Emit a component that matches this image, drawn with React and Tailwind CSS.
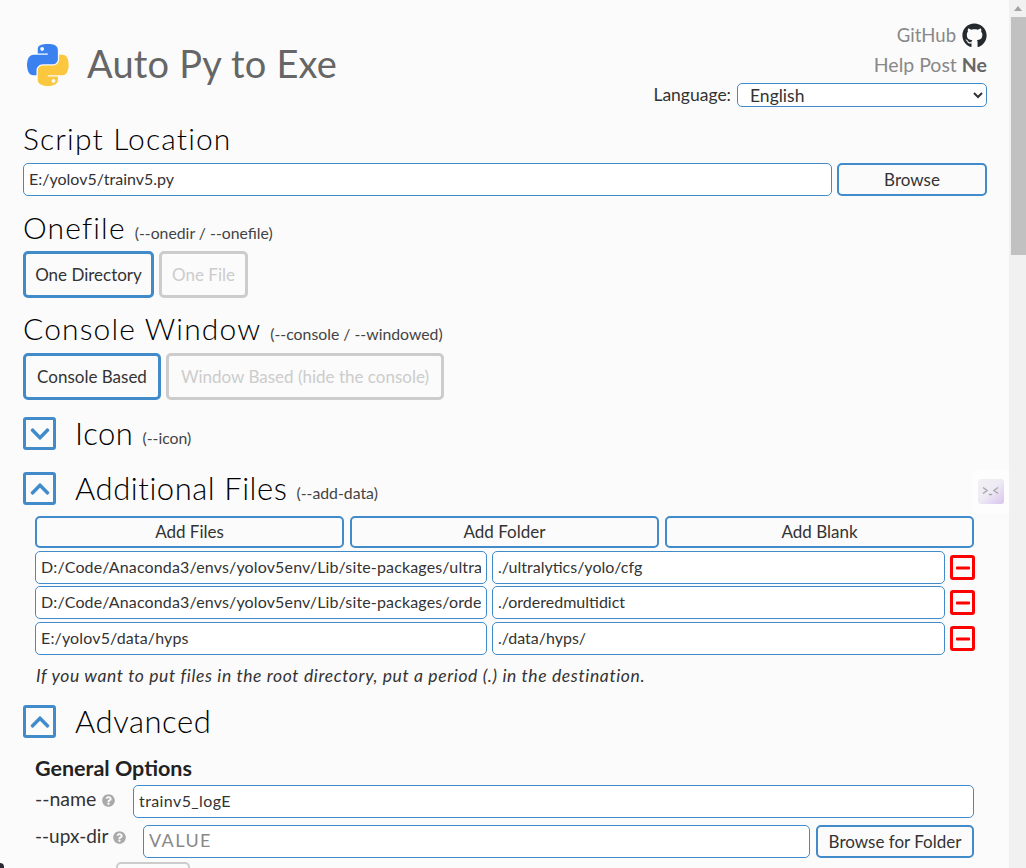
import React from 'react';
import { FaGithub, FaChevronDown, FaChevronUp, FaMinus, FaQuestionCircle } from 'react-icons/fa';

const inputClass = 'h-[33px] min-w-0 rounded-[5px] border border-[#428bca] bg-white px-[5px] pb-[2px] text-[16px] text-[#333] placeholder:text-[#888] outline-none';
const blueButton = 'rounded-[5px] border-2 border-[#428bca] bg-[#fbfbfb] text-[17px] text-[#333]';
const heading = 'text-[30px] leading-[38px] font-light tracking-[1.15px] text-black';
const flagClass = 'ml-[9px] text-[15.8px] text-[#444]';

const PythonLogo = () => (
  <svg viewBox="0 0 112 112" className="w-[42px] h-[42px]">
    <path fill="#3b82f0" d="M54.9 0C50.3 0 46 .4 42.1 1.1 30.8 3.1 28.7 7.3 28.7 15v10.2h26.8v3.4H18.6C10.8 28.7 4 33.3 1.9 42.3c-2.5 10.2-2.6 16.5 0 27.2 1.9 7.9 6.4 13.6 14.2 13.6h9.2V70.8c0-8.8 7.7-16.6 16.8-16.6h26.8c7.4 0 13.4-6.1 13.4-13.6V15c0-7.3-6.1-12.7-13.4-13.9C64.3.3 59.5 0 54.9 0zM40.4 8.2c2.8 0 5 2.3 5 5.1s-2.2 5.1-5 5.1-5-2.3-5-5.1 2.2-5.1 5-5.1z" />
    <path fill="#fbc73f" d="M85.6 28.7v11.9c0 9.2-7.8 17-16.7 17H42.1c-7.3 0-13.4 6.3-13.4 13.6v25.5c0 7.3 6.3 11.5 13.4 13.6 8.5 2.5 16.6 3 26.8 0 6.8-2 13.4-5.9 13.4-13.6V86.5H55.5v-3.4h40.2c7.8 0 10.7-5.4 13.4-13.6 2.8-8.4 2.7-16.5 0-27.2-1.9-7.8-5.6-13.6-13.4-13.6H85.6zM70.6 93.3c2.8 0 5 2.3 5 5.1s-2.2 5.1-5 5.1-5-2.3-5-5.1 2.2-5.1 5-5.1z" />
  </svg>
);

const Toggle = ({ open }) => (
  <button className="w-[33px] h-[33px] shrink-0 rounded-[3px] border-[3px] border-[#428bca] bg-[#fbfbfb] flex items-center justify-center text-[#428bca]">
    {open ? <FaChevronUp size={22} /> : <FaChevronDown size={22} />}
  </button>
);

const Section = ({ open, title, flag, className }) => (
  <div className={`flex items-center ${className}`}>
    <Toggle open={open} />
    <h2 className="ml-[19px] text-[31px] leading-[33px] font-light tracking-[0.55px] text-black">{title}</h2>
    {flag && <span className={`${flagClass} mt-[8px]`}>{flag}</span>}
  </div>
);

const DataRow = ({ src, dest }) => (
  <div className="flex gap-[5px] items-center">
    <input readOnly value={src} className={`${inputClass} w-[452px] shrink-0 tracking-[0.15px]`} />
    <input readOnly value={dest} className={`${inputClass} w-[453px] shrink-0`} />
    <button className="w-[25px] h-[25px] shrink-0 rounded-[3px] border-[3px] border-[#ff0000] flex items-center justify-center text-[#ff0000]">
      <FaMinus size={16} />
    </button>
  </div>
);

const Help = ({ className }) => <FaQuestionCircle size={13} className={`text-[#aaa] mt-[3px] ${className}`} />;

export default function App() {
  return (
    <div className="relative h-screen w-full flex overflow-hidden bg-[#fbfbfb] font-['Lato',sans-serif] text-[#333]">
      <main className="relative flex-1 min-w-0 pl-[23px] pr-[22px]">
        <header className="flex justify-between h-[121px]">
          <div className="flex items-center h-[42px] mt-[44px] pl-[4px]">
            <PythonLogo />
            <h1 className="ml-[18px] -mt-[4px] text-[38px] text-[#666] tracking-[0.2px]">Auto Py to Exe</h1>
          </div>
          <div className="flex flex-col items-end pt-[22px]">
            <div className="flex items-center h-[27px] text-[18.5px] text-[#888]">
              GitHub <FaGithub size={25} className="ml-[6px] text-[#24292e]" />
            </div>
            <div className="flex items-center h-[32px] text-[19.5px] text-[#888]">
              Help Post <b className="ml-[5px] text-[#666]">Ne</b>
            </div>
            <div className="flex items-center mt-[1px]">
              <span className="mr-[6px] text-[17.5px]">Language:</span>
              <select className="w-[250px] h-[24px] pl-[8px] rounded-[5px] border border-[#428bca] bg-white text-[17.5px]">
                <option>English</option>
              </select>
            </div>
          </div>
        </header>

        <h2 className={`${heading} -mt-[2px]`}>Script Location</h2>
        <div className="flex gap-[5px] mt-[6px]">
          <input readOnly value="E:/yolov5/trainv5.py" className={`${inputClass} flex-1`} />
          <button className={`${blueButton} w-[150px] h-[33px]`}>Browse</button>
        </div>

        <div className="flex items-baseline mt-[13px] h-[42px]">
          <h2 className={`${heading} -mt-[1px]`}>Onefile</h2>
          <span className={flagClass}>(--onedir / --onefile)</span>
        </div>
        <div className="flex gap-[5px]">
          <button className="h-[47px] w-[131px] rounded-[5px] border-[3px] border-[#428bca] text-[17px]">One Directory</button>
          <button disabled className="h-[47px] w-[89px] rounded-[5px] border-[3px] border-[#ccc] text-[17px] text-[#ccc]">One File</button>
        </div>

        <div className="flex items-baseline mt-[10px] h-[45px]">
          <h2 className={`${heading} mt-[1px]`}>Console Window</h2>
          <span className={flagClass}>(--console / --windowed)</span>
        </div>
        <div className="flex gap-[5px]">
          <button className="h-[47px] w-[138px] rounded-[5px] border-[3px] border-[#428bca] text-[17px]">Console Based</button>
          <button disabled className="h-[47px] w-[278px] rounded-[5px] border-[3px] border-[#ccc] text-[17px] text-[#ccc]">Window Based (hide the console)</button>
        </div>

        <Section title="Icon" flag="(--icon)" className="mt-[17px]" />
        <Section open title="Additional Files" flag="(--add-data)" className="mt-[22px]" />

        <div className="pl-[12px] pr-[13px] mt-[11px]">
          <div className="flex gap-[6px]">
            <button className={`${blueButton} flex-1 h-[32px]`}>Add Files</button>
            <button className={`${blueButton} flex-1 h-[32px]`}>Add Folder</button>
            <button className={`${blueButton} flex-1 h-[32px]`}>Add Blank</button>
          </div>
          <div className="flex flex-col mt-[3px]">
            <DataRow src="D:/Code/Anaconda3/envs/yolov5env/Lib/site-packages/ultralytics/yolo/cfg" dest="./ultralytics/yolo/cfg" />
            <div className="mt-[2px]">
              <DataRow src="D:/Code/Anaconda3/envs/yolov5env/Lib/site-packages/orderedmultidict" dest="./orderedmultidict" />
            </div>
            <div className="mt-[3px]">
              <DataRow src="E:/yolov5/data/hyps" dest="./data/hyps/" />
            </div>
          </div>
          <p className="mt-[10px] ml-[1px] text-[17.5px] italic leading-[22px] tracking-[0.62px]">If you want to put files in the root directory, put a period (.) in the destination.</p>
        </div>

        <Section open title="Advanced" className="mt-[18px]" />

        <div className="pl-[12px] pr-[13px]">
          <h3 className="mt-[18px] text-[21.5px] leading-[24px] font-bold text-[#222]">General Options</h3>
          <div className="flex items-start mt-[5px]">
            <div className="flex items-center w-[98px] mt-[2px] text-[19.5px] leading-[24px]">--name <Help className="ml-[6px]" /></div>
            <input readOnly value="trainv5_logE" className={`${inputClass} flex-1 tracking-[0.4px]`} />
          </div>
          <div className="flex items-start mt-[7px]">
            <div className="flex items-center w-[108px] -mt-[1px] text-[19px] leading-[24px]">--upx-dir <Help className="ml-[5px]" /></div>
            <input placeholder="VALUE" className={`${inputClass} flex-1 placeholder:text-[18px] placeholder:tracking-[1.4px]`} />
            <button className={`${blueButton} ml-[6px] w-[158px] h-[33px]`}>Browse for Folder</button>
          </div>
          <div className="flex items-start mt-[4px]">
            <button disabled className="ml-[81px] w-[74px] h-[33px] rounded-[5px] border-2 border-[#ccc]"></button>
          </div>
        </div>

        <div className="absolute right-0 top-[470px] w-[37px] h-[43px] bg-white/60 flex items-center justify-center rounded-l-[6px]">
          <div className="w-[26px] h-[25px] rounded-[3px] bg-gradient-to-br from-[#f1f1f4] via-[#eeeaf4] to-[#d9c3ee] flex items-center justify-center">
            <svg viewBox="0 0 26 25" className="w-[26px] h-[25px]" fill="none" stroke="#aaa" strokeWidth="1.5">
              <path d="M5 8.5l4 3-4 3M20 8.5l-4 3 4 3M11 15q1.5 1.5 3 0" />
            </svg>
          </div>
        </div>
      </main>

      <aside className="w-[17px] shrink-0 bg-[#f1f1f1] flex flex-col">
        <div className="h-[17px] flex items-center justify-center">
          <div className="w-0 h-0 border-x-[4px] border-x-transparent border-b-[5px] border-b-[#a3a3a3]" />
        </div>
        <div className="h-[238px] ml-[2px] bg-[#c1c1c1]" />
      </aside>

      <div className="absolute left-0 bottom-0 w-[4px] h-[5px] rounded-tr-full bg-[#2a2a35]" />
    </div>
  );
}
